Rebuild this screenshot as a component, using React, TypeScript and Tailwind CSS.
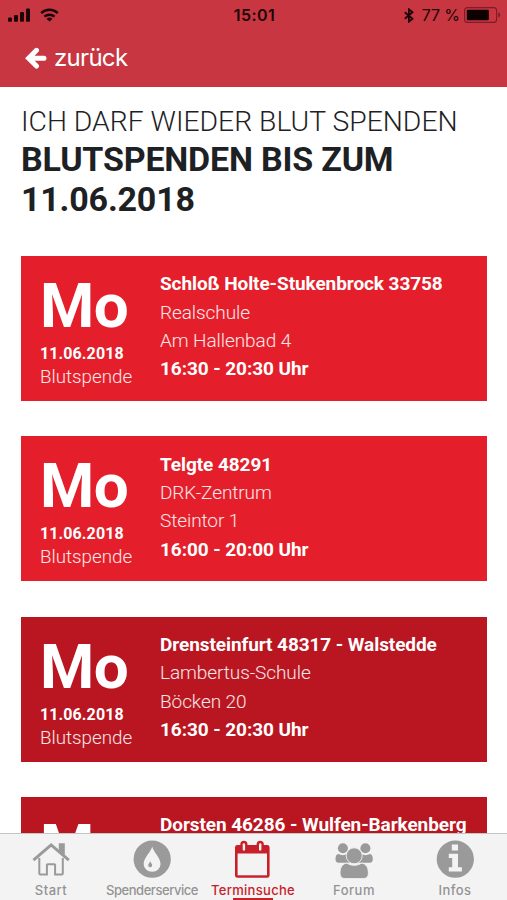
import type { ReactNode } from "react";

const appointments = [
  {
    day: "Mo",
    date: "11.06.2018",
    type: "Blutspende",
    town: "Schloß Holte-Stukenbrock 33758",
    venue: "Realschule",
    street: "Am Hallenbad 4",
    time: "16:30 - 20:30 Uhr",
    color: "bg-[#e41f2b]",
  },
  {
    day: "Mo",
    date: "11.06.2018",
    type: "Blutspende",
    town: "Telgte 48291",
    venue: "DRK-Zentrum",
    street: "Steintor 1",
    time: "16:00 - 20:00 Uhr",
    color: "bg-[#e41f2b]",
  },
  {
    day: "Mo",
    date: "11.06.2018",
    type: "Blutspende",
    town: "Drensteinfurt 48317 - Walstedde",
    venue: "Lambertus-Schule",
    street: "Böcken 20",
    time: "16:30 - 20:30 Uhr",
    color: "bg-[#ba1621]",
  },
  {
    day: "Mo",
    date: "",
    type: "",
    town: "Dorsten 46286 - Wulfen-Barkenberg",
    venue: "",
    street: "",
    time: "",
    color: "bg-[#ba1621]",
  },
];

const HomeIcon = () => (
  <svg className="size-10" viewBox="0 0 40 40" fill="none" stroke="#9a9a9a">
    <path d="M27.8 10V4.300h6v12l-6-5.400z" fill="#9a9a9a" stroke="none" />
    <path d="M2.500 21.200 20.100 5.800l17.700 15.400" strokeWidth="2.900" />
    <path
      d="M8.300 19v15.500a1 1 0 0 0 1 1h6.600V26a.8.8 0 0 1 .8-.8h6.600a.8.8 0 0 1 .8.8v9.500h6.700a1 1 0 0 0 1-1V19"
      strokeWidth="2"
    />
  </svg>
);

const DropIcon = () => (
  <svg className="size-10" viewBox="0 0 40 40">
    <circle cx="20.200" cy="20.200" r="18.600" fill="#9a9a9a" />
    <path
      d="M20.200 7.500c1 5.300 8.300 11 8.300 17.200 0 4.700-3.600 8-8.300 8s-8.500-3.300-8.500-8c0-6.200 7.500-11.900 8.500-17.200z"
      fill="#f3f3f3"
    />
    <path
      d="M18.200 22.200c.4 1.500 2 2.400 2 4.100a2 2 0 0 1-4 0c0-1.700 1.600-2.600 2-4.100z"
      fill="#9a9a9a"
    />
  </svg>
);

const CalendarIcon = () => (
  <svg className="size-10" viewBox="0 0 40 40">
    <path
      d="M4.400 6h29.800a2.400 2.400 0 0 1 2.400 2.400v28a2.400 2.400 0 0 1-2.400 2.400H4.400A2.400 2.400 0 0 1 2 36.400v-28A2.400 2.400 0 0 1 4.400 6z"
      fill="#c8202b"
    />
    <path d="M4.600 14.500H34v21.800H4.600z" fill="#f3f3f3" />
    <rect x="7.300" y="1.800" width="7.200" height="11" rx="3.600" fill="#c8202b" />
    <rect x="23.600" y="1.800" width="7.200" height="11" rx="3.600" fill="#c8202b" />
    <rect x="9.700" y="4.200" width="2.400" height="7.400" rx="1.200" fill="#f3f3f3" />
    <rect x="26" y="4.200" width="2.400" height="7.400" rx="1.200" fill="#f3f3f3" />
  </svg>
);

const ForumIcon = () => (
  <svg className="size-10" viewBox="0 0 40 40" fill="#9a9a9a">
    <circle cx="8.900" cy="9.300" r="5" />
    <circle cx="31.400" cy="9.300" r="5" />
    <path d="M4.500 15c2.500 1.500 6 1.500 8.500 0l3 8.800H4.500c-2 0-3-1.200-3-3.200 0-2.800.7-5.600 3-5.600z" />
    <path d="M35.800 15c-2.500 1.500-6 1.500-8.500 0l-3 8.800h11.500c2 0 3-1.200 3-3.200 0-2.800-.7-5.600-3-5.600z" />
    <path
      d="M13.200 24.200c4 2.800 10 2.800 14 0 4.800 0 7.200 4.300 7.200 10 0 3.500-1.800 5.400-5 5.400H11c-3.200 0-5-1.900-5-5.400 0-5.700 2.400-10 7.200-10z"
      stroke="#f3f3f3"
      strokeWidth="0.900"
    />
    <circle cx="20.200" cy="16.800" r="8" stroke="#f3f3f3" strokeWidth="0.900" />
  </svg>
);

const InfoIcon = () => (
  <svg className="size-10" viewBox="0 0 40 40">
    <circle cx="20.300" cy="20.200" r="18.600" fill="#9a9a9a" />
    <path
      d="M16.800 5.600H23v5.800h-6.200zM13.800 14.700H23v13.600h3.900v4.200H13.800v-4.200h3.400v-9.400h-3.400z"
      fill="#f3f3f3"
    />
  </svg>
);

const tabs: { label: string; icon: ReactNode; tracking: string; active?: boolean }[] = [
  { label: "Start", icon: <HomeIcon />, tracking: "tracking-[0.5px]" },
  { label: "Spenderservice", icon: <DropIcon />, tracking: "tracking-[-0.45px]" },
  { label: "Terminsuche", icon: <CalendarIcon />, tracking: "tracking-[0.3px]", active: true },
  { label: "Forum", icon: <ForumIcon />, tracking: "tracking-[0.5px]" },
  { label: "Infos", icon: <InfoIcon />, tracking: "tracking-[0.4px]" },
];

const StatusBar = () => (
  <div className="grid h-[30px] grid-cols-3 items-center pl-[8px] pr-[6px] font-[Inter,sans-serif] text-[#1c0507]">
    <div className="flex items-center gap-[9px]">
      <svg className="h-[14px] w-[23px]" viewBox="0 0 23 14" fill="#1c0507">
        <rect x="0" y="9.500" width="4" height="4.300" rx="1" />
        <rect x="6" y="7" width="4" height="6.800" rx="1" />
        <rect x="12" y="4" width="4" height="9.800" rx="1" />
        <rect x="18" y="0.500" width="4" height="13.300" rx="1" />
      </svg>
      <svg
        className="h-[14px] w-[19px]"
        viewBox="0 0 19 14"
        fill="none"
        stroke="#1c0507"
        strokeWidth="2.500"
      >
        <path d="M1.200 5.200a12 12 0 0 1 16.600 0" />
        <path d="M4.400 8.700a7.500 7.500 0 0 1 10.200 0" />
        <path d="M9.500 13.600 6.600 10.900a4.200 4.200 0 0 1 5.800 0z" fill="#1c0507" stroke="none" />
      </svg>
    </div>
    <div className="text-center text-[16px] font-semibold tracking-[0.4px]">15:01</div>
    <div className="flex items-center justify-end whitespace-nowrap">
      <svg
        className="mr-[8px] h-[15px] w-[10px]"
        viewBox="0 0 10 15"
        fill="none"
        stroke="#1c0507"
        strokeWidth="1.800"
      >
        <path d="m.8 4.200 7.700 6.600-3.600 2.900V1.300l3.600 2.900L.8 10.800" />
      </svg>
      <span className="text-[16px] tracking-[-0.1px]">77 %</span>
      <svg className="ml-[4px] h-[16px] w-[37px]" viewBox="0 0 37 16">
        <rect
          x="0.600"
          y="0.600"
          width="32"
          height="14.800"
          rx="3"
          fill="none"
          stroke="#7d1d27"
          strokeWidth="1.100"
        />
        <rect x="2.800" y="2.800" width="22" height="10.400" rx="1" fill="#0d0102" />
        <path d="M34.200 5.500c2.600.6 2.600 4.400 0 5z" fill="#7d1d27" />
      </svg>
    </div>
  </div>
);

export default function App() {
  return (
    <div className="flex h-[900px] w-[507px] flex-col overflow-hidden bg-white font-[Roboto,sans-serif]">
      <header className="h-[87px] shrink-0 bg-[#c73641]">
        <StatusBar />
        <button className="flex items-center gap-[7px] pl-[25px] pt-[10px] font-[Inter,sans-serif] text-[24px] leading-9 tracking-[-0.7px] text-white">
          <svg
            className="h-[23px] w-[22px]"
            viewBox="0 0 22 23"
            fill="none"
            stroke="white"
            strokeWidth="5"
            strokeLinecap="round"
          >
            <path d="M11.500 3.300 3.600 11.200l7.900 7.900M5 11.200h14" />
          </svg>
          <span>zurück</span>
        </button>
      </header>

      <main className="min-h-0 flex-1 overflow-hidden pl-[21px] pr-[20px] pt-[18px]">
        <h1 className="whitespace-nowrap uppercase text-[#1d2124]">
          <span className="block text-[28.300px] font-light leading-[34px]">
            Ich darf wieder Blut spenden
          </span>
          <span className="block text-[34px] font-bold leading-10 tracking-[-0.2px]">
            Blutspenden bis zum
            <br />
            11.06.2018
          </span>
        </h1>
        <div className="mt-[37px] flex flex-col gap-[35.300px]">
          {appointments.map((item) => (
            <article
              key={item.town}
              className={`flex h-[145px] shrink-0 whitespace-nowrap pl-[19px] text-white ${item.color}`}
            >
              <div className="w-[120px] pt-5">
                <div className="text-[62px] font-bold leading-[60px] tracking-[-0.6px]">
                  {item.day}
                </div>
                <div className="mt-[6px] text-[16px] font-bold leading-6 tracking-[0.1px]">
                  {item.date}
                </div>
                <div className="text-[18.800px] font-light leading-[23px] text-white/90">
                  {item.type}
                </div>
              </div>
              <div className="pt-[14.400px] text-[19px] leading-[28.300px] tracking-[-0.080px]">
                <div className="font-bold">{item.town}</div>
                <div className="font-light text-white/90">{item.venue}</div>
                <div className="font-light text-white/90">{item.street}</div>
                <div className="font-bold">{item.time}</div>
              </div>
            </article>
          ))}
        </div>
      </main>

      <nav className="flex h-[67px] shrink-0 border-t border-[#c4c4c4] bg-[#f3f3f3] pl-[0.5px] pt-[5px]">
        {tabs.map((tab) => (
          <div key={tab.label} className="flex w-[101px] flex-col items-center">
            <div className="shrink-0">{tab.icon}</div>
            <span
              className={`mt-[4px] shrink-0 font-[Inter,sans-serif] text-[13px] font-medium leading-[15px] ${tab.tracking} ${
                tab.active ? "text-[#c8202b]" : "text-[#939393]"
              }`}
            >
              {tab.label}
            </span>
            {tab.active && <div className="h-[2px] w-10 shrink-0 bg-[#c8202b]" />}
          </div>
        ))}
      </nav>
    </div>
  );
}
